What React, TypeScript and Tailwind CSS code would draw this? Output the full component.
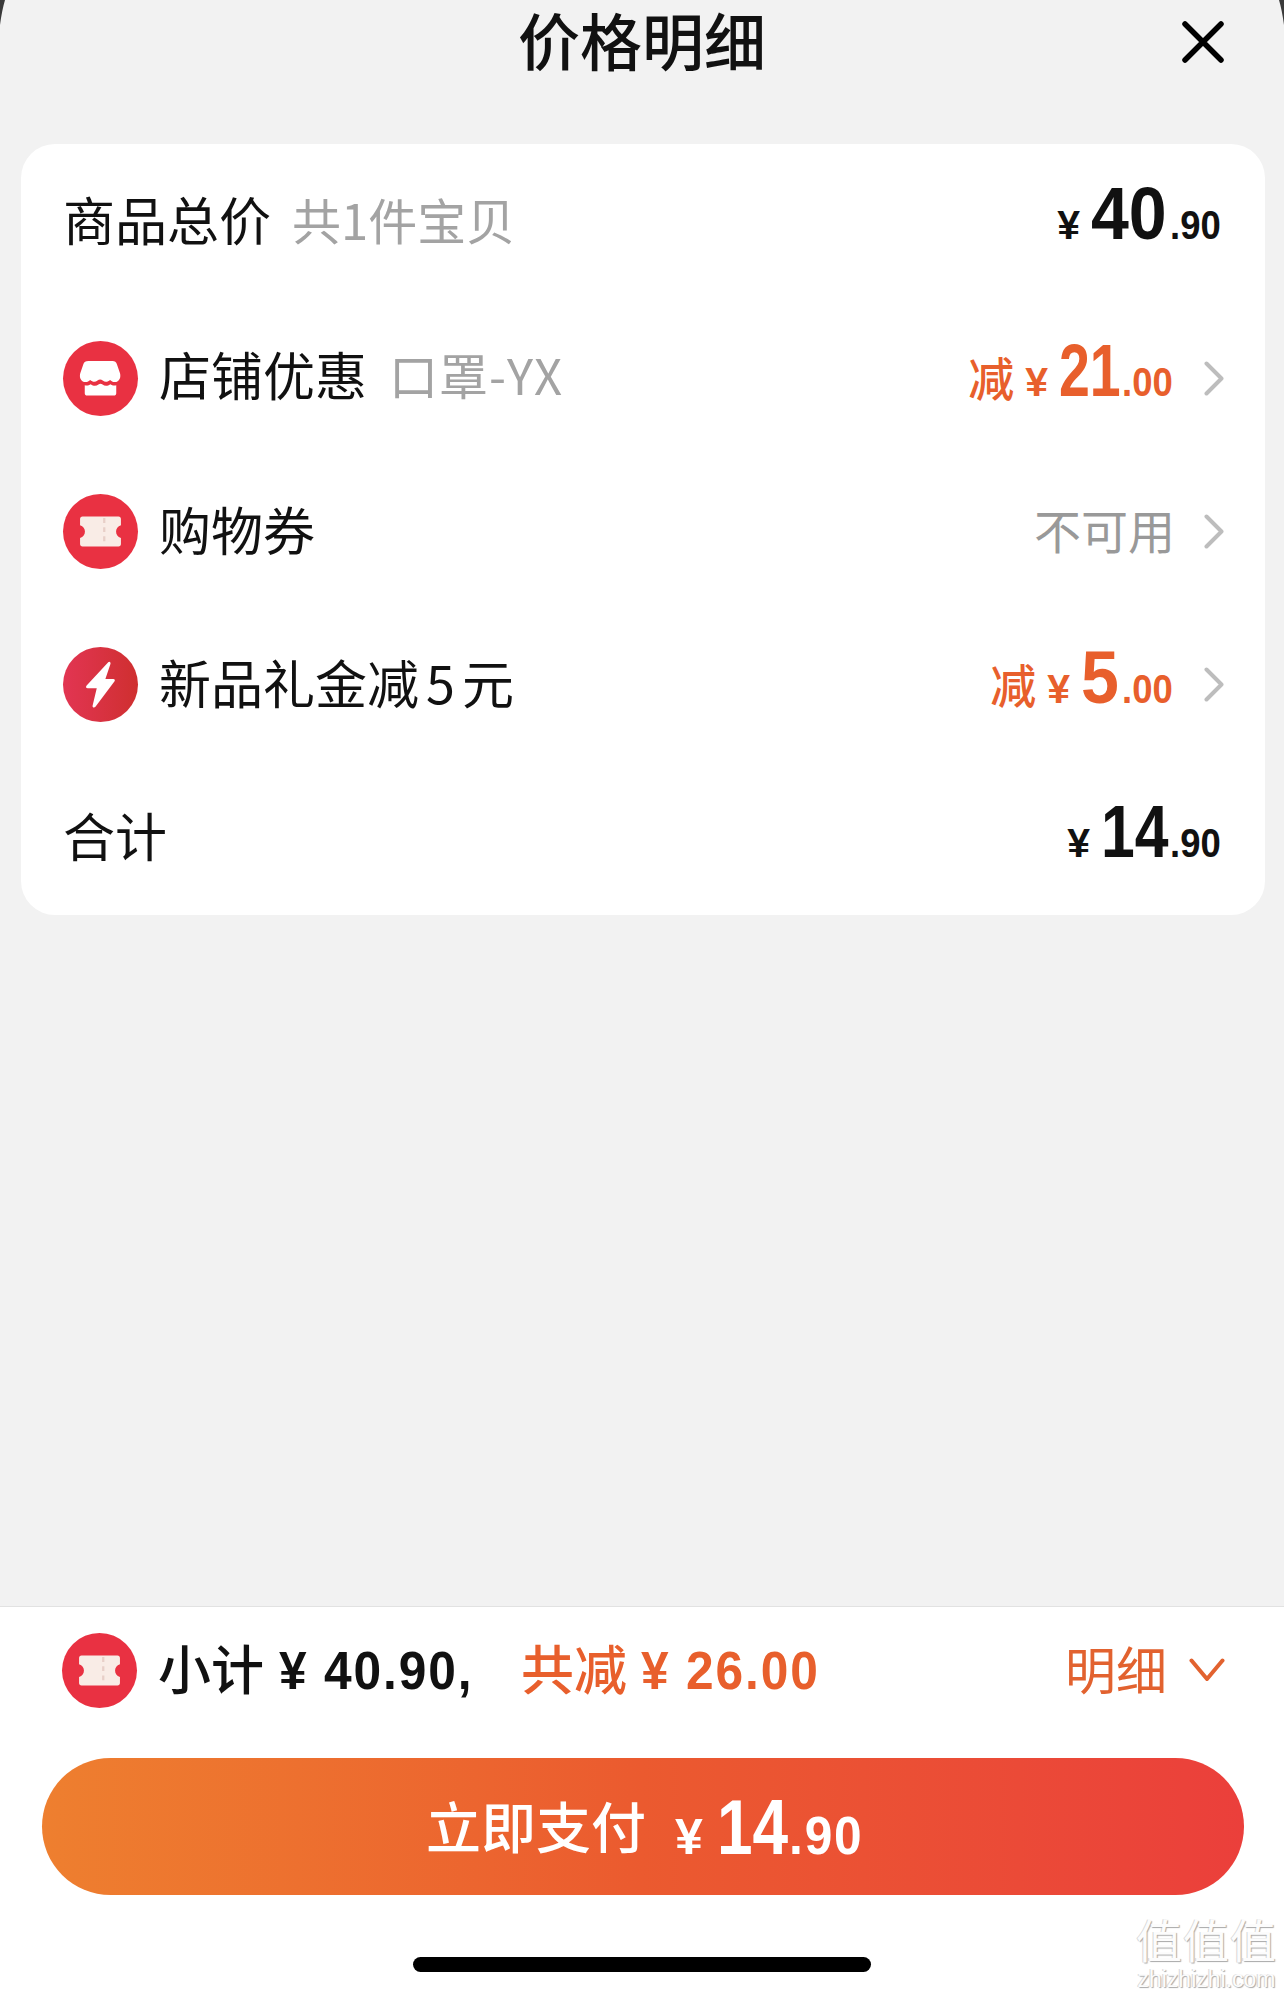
const cjk = "font-['Noto_Sans_CJK_SC','Noto_Sans',sans-serif]";
const num = "font-['Liberation_Sans',sans-serif] font-bold leading-none";

function ShopIcon() {
  return (
    <span className="flex h-[75px] w-[75px] shrink-0 items-center justify-center rounded-full bg-[#e93142]">
      <svg viewBox="0 0 40 40" className="h-[75px] w-[75px]">
        <path
          d="M13.6 10.6h12.8c1.2 0 2 .6 2.3 1.6l1.7 5c.6 2.3-.3 4.1-2 4.6-1.4.4-2.4-.2-3.3-1-1.2 1.1-2.6 1.4-3.9.3-.9-.7-1.9-.7-2.8 0-1.3 1.1-2.7.8-3.9-.3-.9.8-1.9 1.4-3.3 1-1.7-.5-2.6-2.3-2-4.6l1.7-5c.3-1 1.1-1.6 2.7-1.6z"
          fill="#fff"
        />
        <path
          d="M11.6 23.6c1.2.4 2.2.1 3.2-.6 1.3 1 2.8 1.2 4.1.2.7-.5 1.5-.5 2.2 0 1.3 1 2.8.8 4.1-.2 1 .7 2 1 3.2.6v4.2c0 .8-.5 1.3-1.3 1.3H12.9c-.8 0-1.3-.5-1.3-1.3z"
          fill="#fff"
        />
      </svg>
    </span>
  );
}

function TicketIcon() {
  return (
    <span className="flex h-[75px] w-[75px] shrink-0 items-center justify-center rounded-full bg-[#e93142]">
      <svg viewBox="0 0 40 40" className="h-[75px] w-[75px]">
        <path
          d="M10.4 12h19.2c.8 0 1.3.5 1.3 1.3v3.3c-1.7.5-2.6 1.8-2.6 3.4s.9 2.9 2.6 3.4v3.3c0 .8-.5 1.3-1.3 1.3H10.4c-.8 0-1.3-.5-1.3-1.3v-3.3c1.7-.5 2.6-1.8 2.6-3.4s-.9-2.9-2.6-3.4v-3.3c0-.8.5-1.3 1.3-1.3z"
          fill="#f9ece6"
        />
        <path d="M22 12.8v14.4" stroke="#e8cfc8" strokeWidth="1.2" strokeDasharray="2.6 2.3" />
      </svg>
    </span>
  );
}

function BoltIcon() {
  return (
    <span className="flex h-[75px] w-[75px] shrink-0 items-center justify-center rounded-full bg-gradient-to-r from-[#e23552] to-[#cf2f2f]">
      <svg viewBox="0 0 40 40" className="h-[75px] w-[75px]">
        <path
          d="M24 8.2c.8-.7 1.6 0 1.3.9L22.6 17h4.2c.8 0 1.1.7.6 1.4L17.3 31.9c-.7.8-1.8.3-1.5-.7L18 22h-4.8c-.9 0-1.2-.8-.6-1.5z"
          fill="#fff"
        />
      </svg>
    </span>
  );
}

function Chevron() {
  return (
    <svg viewBox="0 0 20 35" className="ml-[29px] h-[35px] w-[20px] shrink-0" fill="none">
      <path d="M2.5 2.5 17.5 17.5 2.5 32.5" stroke="#bdbdbd" strokeWidth="4" strokeLinecap="round" strokeLinejoin="round" />
    </svg>
  );
}

function Price({
  prefix,
  whole,
  cents,
  box,
  squeeze,
  color = "text-[#111111]",
}: {
  prefix?: string;
  whole: string;
  cents: string;
  box: string;
  squeeze: string;
  color?: string;
}) {
  return (
    <span className={`flex items-baseline ${color}`}>
      {prefix && <span className={`${cjk} mr-[11px] text-[46px] leading-none font-medium`}>{prefix}</span>}
      <span className={`${num} mr-[11px] text-[41px]`}>¥</span>
      <span className={`${box} inline-block`}>
        <span className={`${num} ${squeeze} block origin-left text-[74px] whitespace-nowrap`}>{whole}</span>
      </span>
      <span className="ml-[3px] inline-block w-[53px]">
        <span className={`${num} block origin-left scale-x-[0.89] text-[41px] whitespace-nowrap`}>.{cents}</span>
      </span>
    </span>
  );
}

export default function App() {
  return (
    <div className={`${cjk} relative flex h-[1996px] w-[1284px] flex-col overflow-hidden bg-[#f2f2f2] text-[#111111]`}>
      {/* Header */}
      <div className="relative h-[144px] shrink-0">
        <div className="text-center text-[62px] leading-[78px] font-medium">价格明细</div>
        <svg viewBox="0 0 42 42" className="absolute top-[21px] right-[60px] h-[42px] w-[42px]" fill="none">
          <path d="M3 3 39 39M39 3 3 39" stroke="#000" strokeWidth="5.5" strokeLinecap="round" />
        </svg>
      </div>

      {/* Card */}
      <div className="mr-[19px] ml-[21px] flex h-[771px] flex-col rounded-[34px] bg-white pt-[4px] pr-[41px] pl-[42px] text-[52px]">
        <div className="flex flex-1 items-center justify-between">
          <div className="flex items-center gap-[21px] pb-[11px]">
            <span>商品总价</span>
            <span className="text-[49px] text-[#a3a3a3]">共1件宝贝</span>
          </div>
          <div className="pr-[1px] pb-[22px]">
            <Price whole="40" cents="90" box="w-[76px]" squeeze="scale-x-[0.92]" />
          </div>
        </div>

        <div className="flex flex-1 items-center justify-between">
          <div className="flex items-center">
            <ShopIcon />
            <span className="ml-[21px] pb-[8px]">店铺优惠</span>
            <span className="ml-[22px] pb-[8px] text-[49px] tracking-[1px] text-[#a3a3a3]">口罩-YX</span>
          </div>
          <div className="flex items-center">
            <span className="pb-[15px]">
              <Price prefix="减" whole="21" cents="00" box="w-[60px]" squeeze="scale-x-[0.75]" color="text-[#e85f2c]" />
            </span>
            <Chevron />
          </div>
        </div>

        <div className="flex flex-1 items-center justify-between">
          <div className="flex items-center">
            <TicketIcon />
            <span className="ml-[21px] pb-[6px]">购物券</span>
          </div>
          <div className="flex items-center">
            <span className="pb-[4px] text-[47px] text-[#999999]">不可用</span>
            <Chevron />
          </div>
        </div>

        <div className="flex flex-1 items-center justify-between">
          <div className="flex items-center">
            <BoltIcon />
            <span className="ml-[21px] pb-[6px]">
              新品礼金减<span className="mx-[7px]">5</span>元
            </span>
          </div>
          <div className="flex items-center">
            <span className="pb-[13px]">
              <Price prefix="减" whole="5" cents="00" box="w-[38px]" squeeze="scale-x-[0.92]" color="text-[#e85f2c]" />
            </span>
            <Chevron />
          </div>
        </div>

        <div className="flex flex-1 items-center justify-between">
          <span className="pb-[6px]">合计</span>
          <div className="pr-[1px] pb-[13px]">
            <Price whole="14" cents="90" box="w-[66px]" squeeze="scale-x-[0.82]" />
          </div>
        </div>
      </div>

      <div className="flex-1" />

      {/* Footer */}
      <div className="relative h-[390px] shrink-0 border-t border-[#e2e2e2] bg-white">
        <div className="flex h-[126px] items-center justify-between pr-[59px] pl-[62px]">
          <div className="flex items-center">
            <TicketIcon />
            <span className="ml-[21px] pb-[4px] text-[53px] font-medium">小计</span>
            <span className="ml-[15px] inline-block w-[190px]">
              <span className={`${num} block origin-left scale-x-[0.92] text-[54px] tracking-[2px] whitespace-nowrap`}>¥ 40.90,</span>
            </span>
            <span className="ml-[52px] pb-[4px] text-[53px] font-medium text-[#e85f2c]">共减</span>
            <span className="ml-[14px] inline-block w-[170px]">
              <span className={`${num} block origin-left scale-x-[0.92] text-[54px] tracking-[2px] whitespace-nowrap text-[#e85f2c]`}>¥ 26.00</span>
            </span>
          </div>
          <div className="flex items-center text-[#e2622f]">
            <span className="pb-[4px] text-[51px]">明细</span>
            <svg viewBox="0 0 36 24" className="ml-[22px] h-[24px] w-[36px]" fill="none">
              <path d="M2.5 2.5 18 21 33.5 2.5" stroke="#e2622f" strokeWidth="4" strokeLinecap="round" strokeLinejoin="round" />
            </svg>
          </div>
        </div>
        <div className="mt-[25px] mr-[40px] ml-[42px] flex h-[137px] items-center rounded-full bg-gradient-to-r from-[#ee7f2f] via-[#eb5a2f] to-[#eb3f3b] pl-[384px] text-white">
          <span className="pb-[4px] text-[55px] font-medium">立即支付</span>
          <span className="ml-[29px] flex items-baseline">
            <span className={`${num} mr-[14px] text-[50px]`}>¥</span>
            <span className="inline-block w-[72px]">
              <span className={`${num} block origin-left scale-x-[0.82] text-[78px] whitespace-nowrap`}>14</span>
            </span>
            <span className="inline-block w-[72px]">
              <span className={`${num} block origin-left scale-x-[0.92] text-[54px] tracking-[2px] whitespace-nowrap`}>.90</span>
            </span>
          </span>
        </div>
        <div className="mx-auto mt-[62px] h-[15px] w-[458px] rounded-full bg-black" />

        {/* Watermark */}
        <div className="absolute top-[303px] right-[7px] flex flex-col items-center text-[#fcfcfc] [text-shadow:1px_1px_1px_#a8a8a8,-1px_0_0_#d8d8d8]">
          <span className="text-[46px] leading-[56px] tracking-[1px]">值值值</span>
          <span className="font-['Liberation_Sans',sans-serif] text-[23px] leading-[26px]">zhizhizhi.com</span>
        </div>
      </div>

      {/* Edge of the sheet behind */}
      <svg viewBox="0 0 6 26" className="absolute top-0 left-0 h-[26px] w-[6px]">
        <path d="M0 0H5Q2 10 0 25Z" fill="#3a3a3a" />
      </svg>
      <svg viewBox="0 0 6 26" className="absolute top-0 right-0 h-[26px] w-[6px]">
        <path d="M6 0H1Q4 10 6 25Z" fill="#3a3a3a" />
      </svg>
    </div>
  );
}
